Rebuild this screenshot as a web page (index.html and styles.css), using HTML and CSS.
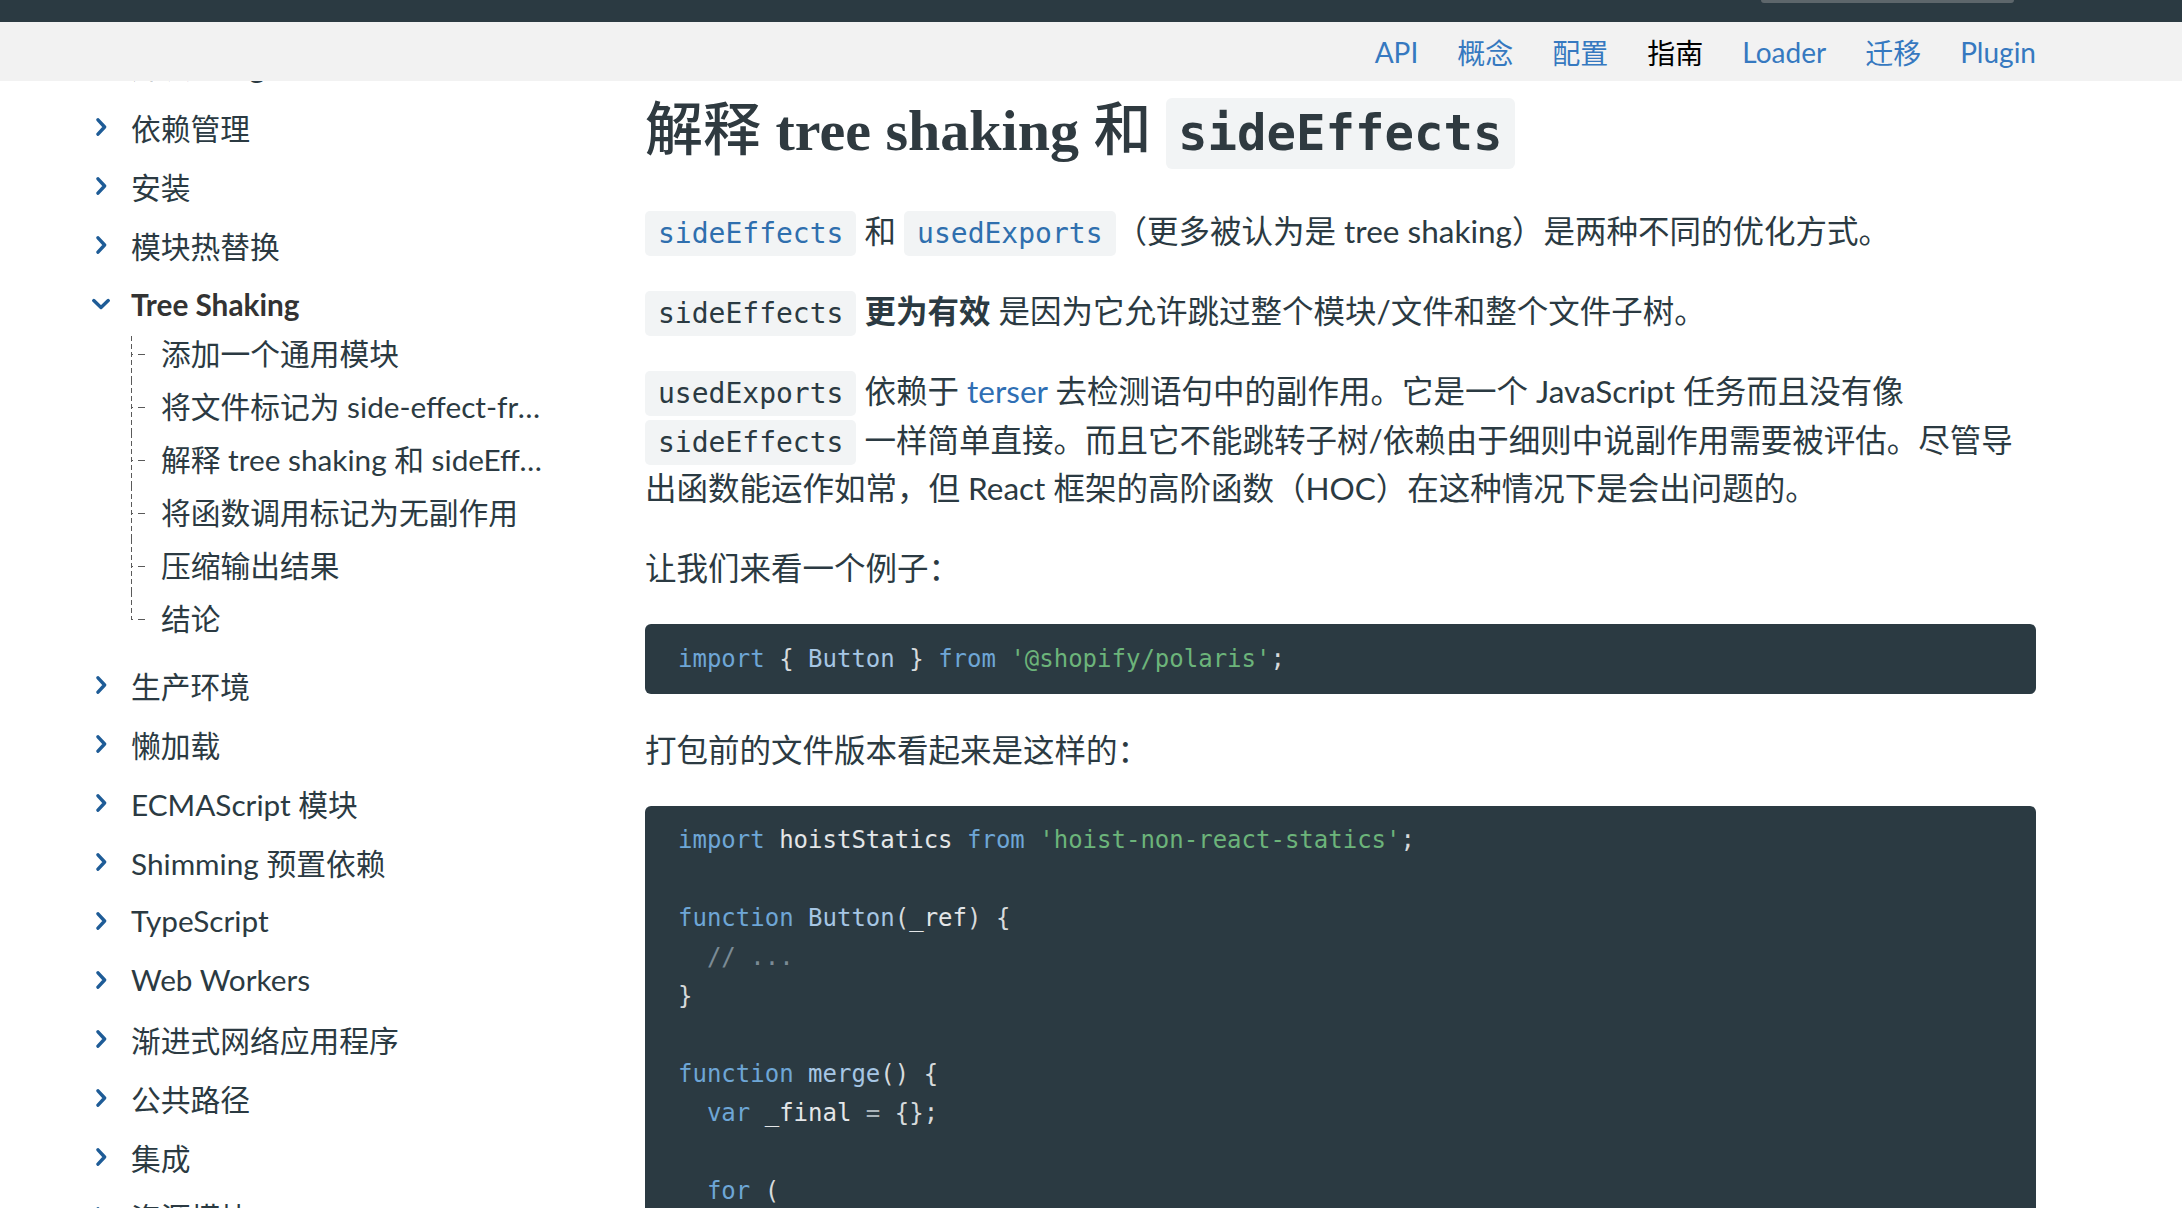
FILE: index.html
```html
<!DOCTYPE html>
<html lang="zh-CN">
<head>
<meta charset="utf-8">
<title>Tree Shaking | webpack 中文文档</title>
<link rel="stylesheet" href="styles.css">
</head>
<body>
<header class="header">
  <div class="topbar"><div class="search"></div></div>
  <nav class="subnav">
    <a class="nav-link" href="#">API</a>
    <a class="nav-link" href="#">概念</a>
    <a class="nav-link" href="#">配置</a>
    <a class="nav-link active" href="#">指南</a>
    <a class="nav-link" href="#">Loader</a>
    <a class="nav-link" href="#">迁移</a>
    <a class="nav-link" href="#">Plugin</a>
  </nav>
</header>
<div class="page">
  <aside class="sidebar">
    <ul class="side-list">
      <li class="side-group"><div class="side-row"><span class="chev"><svg viewBox="0 0 18 18"><path d="M6 1.8 L12.6 9 L6 16.2"/></svg></span><span class="label">开发 - Vagrant</span></div></li>
      <li class="side-group"><div class="side-row"><span class="chev"><svg viewBox="0 0 18 18"><path d="M6 1.8 L12.6 9 L6 16.2"/></svg></span><span class="label">依赖管理</span></div></li>
      <li class="side-group"><div class="side-row"><span class="chev"><svg viewBox="0 0 18 18"><path d="M6 1.8 L12.6 9 L6 16.2"/></svg></span><span class="label">安装</span></div></li>
      <li class="side-group"><div class="side-row"><span class="chev"><svg viewBox="0 0 18 18"><path d="M6 1.8 L12.6 9 L6 16.2"/></svg></span><span class="label">模块热替换</span></div></li>
      <li class="side-group open">
        <div class="side-row"><span class="chev"><svg viewBox="0 0 18 18"><path d="M1.8 5.6 L9 12.4 L16.2 5.6"/></svg></span><span class="label">Tree Shaking</span></div>
        <ul class="sub">
          <li>添加一个通用模块</li>
          <li>将文件标记为 side-effect-free(无副作用)</li>
          <li>解释 tree shaking 和 sideEffects</li>
          <li>将函数调用标记为无副作用</li>
          <li>压缩输出结果</li>
          <li>结论</li>
        </ul>
      </li>
      <li class="side-group"><div class="side-row"><span class="chev"><svg viewBox="0 0 18 18"><path d="M6 1.8 L12.6 9 L6 16.2"/></svg></span><span class="label">生产环境</span></div></li>
      <li class="side-group"><div class="side-row"><span class="chev"><svg viewBox="0 0 18 18"><path d="M6 1.8 L12.6 9 L6 16.2"/></svg></span><span class="label">懒加载</span></div></li>
      <li class="side-group"><div class="side-row"><span class="chev"><svg viewBox="0 0 18 18"><path d="M6 1.8 L12.6 9 L6 16.2"/></svg></span><span class="label">ECMAScript 模块</span></div></li>
      <li class="side-group"><div class="side-row"><span class="chev"><svg viewBox="0 0 18 18"><path d="M6 1.8 L12.6 9 L6 16.2"/></svg></span><span class="label">Shimming 预置依赖</span></div></li>
      <li class="side-group"><div class="side-row"><span class="chev"><svg viewBox="0 0 18 18"><path d="M6 1.8 L12.6 9 L6 16.2"/></svg></span><span class="label">TypeScript</span></div></li>
      <li class="side-group"><div class="side-row"><span class="chev"><svg viewBox="0 0 18 18"><path d="M6 1.8 L12.6 9 L6 16.2"/></svg></span><span class="label">Web Workers</span></div></li>
      <li class="side-group"><div class="side-row"><span class="chev"><svg viewBox="0 0 18 18"><path d="M6 1.8 L12.6 9 L6 16.2"/></svg></span><span class="label">渐进式网络应用程序</span></div></li>
      <li class="side-group"><div class="side-row"><span class="chev"><svg viewBox="0 0 18 18"><path d="M6 1.8 L12.6 9 L6 16.2"/></svg></span><span class="label">公共路径</span></div></li>
      <li class="side-group"><div class="side-row"><span class="chev"><svg viewBox="0 0 18 18"><path d="M6 1.8 L12.6 9 L6 16.2"/></svg></span><span class="label">集成</span></div></li>
      <li class="side-group"><div class="side-row"><span class="chev"><svg viewBox="0 0 18 18"><path d="M6 1.8 L12.6 9 L6 16.2"/></svg></span><span class="label">资源模块</span></div></li>
      <li class="side-group"><div class="side-row"><span class="chev"><svg viewBox="0 0 18 18"><path d="M6 1.8 L12.6 9 L6 16.2"/></svg></span><span class="label">输出管理</span></div></li>
    </ul>
  </aside>
  <main class="content">
    <h1 class="title"><span class="title-cjk">解释</span> tree shaking <span class="title-cjk">和</span> <code class="title-code">sideEffects</code></h1>
    <p><a class="code-link" href="#"><code>sideEffects</code></a> 和 <a class="code-link" href="#"><code>usedExports</code></a>（更多被认为是 tree shaking）是两种不同的优化方式。</p>
    <p><code>sideEffects</code> <strong>更为有效</strong> 是因为它允许跳过整个模块/文件和整个文件子树。</p>
    <p><code>usedExports</code> 依赖于 <a class="link" href="#">terser</a> 去检测语句中的副作用。它是一个 JavaScript 任务而且没有像 <code>sideEffects</code> 一样简单直接。而且它不能跳转子树/依赖由于细则中说副作用需要被评估。尽管导出函数能运作如常，但 React 框架的高阶函数（HOC）在这种情况下是会出问题的。</p>
    <p>让我们来看一个例子：</p>
    <pre class="code"><span class="kw">import</span> <span class="pn">{</span> <span class="fn">Button</span> <span class="pn">}</span> <span class="kw">from</span> <span class="str">'@shopify/polaris'</span><span class="pn">;</span></pre>
    <p>打包前的文件版本看起来是这样的：</p>
    <pre class="code"><span class="kw">import</span> hoistStatics <span class="kw">from</span> <span class="str">'hoist-non-react-statics'</span><span class="pn">;</span>

<span class="kw">function</span> <span class="fn">Button</span><span class="pn">(</span>_ref<span class="pn">)</span> <span class="pn">{</span>
  <span class="com">// ...</span>
<span class="pn">}</span>

<span class="kw">function</span> <span class="fn">merge</span><span class="pn">()</span> <span class="pn">{</span>
  <span class="kw">var</span> _final <span class="op">=</span> <span class="pn">{};</span>

  <span class="kw">for</span> <span class="pn">(</span>
    <span class="kw">var</span> _len <span class="op">=</span> arguments<span class="pn">.</span>length<span class="pn">,</span>
      objs <span class="op">=</span> <span class="kw">new</span> <span class="fn">Array</span><span class="pn">(</span>_len<span class="pn">),</span></pre>
  </main>
</div>
</body>
</html>
```

FILE: styles.css
```css
* { box-sizing: border-box; }
html, body { margin: 0; padding: 0; }
body {
  background: #ffffff;
  font-family: "Lato", "Noto Sans CJK SC", sans-serif;
  color: #2b3a42;
  height: 1208px;
  overflow: hidden;
}

/* header (sits above the scrolled sidebar) */
.header {
  position: relative;
  z-index: 2;
}
.topbar {
  height: 22px;
  background: #2b3a42;
  display: flex;
  justify-content: flex-end;
  padding-right: 168px;
}
.search {
  width: 253px;
  height: 3px;
  background: #5d666b;
  border-radius: 0 0 7px 7px;
}
.subnav {
  height: 59px;
  background: #f2f2f2;
  display: flex;
  justify-content: flex-end;
  align-items: center;
  gap: 39px;
  padding-right: 146px;
  font-size: 28px;
}
.nav-link { color: #3679c0; text-decoration: none; }
.nav-link.active { color: #000000; }

/* layout */
.page { display: flex; }
.sidebar {
  flex: 0 0 645px;
  height: 1127px;
  overflow: hidden;
}
.content {
  flex: 0 0 1391px;
  height: 1127px;
  overflow: hidden;
}

/* sidebar */
.side-list {
  list-style: none;
  margin: -49px 0 0;
  padding: 0 0 0 92px;
}
.side-row {
  display: flex;
  align-items: center;
  height: 59px;
  font-size: 29.75px;
  color: #2b3a42;
}
.side-group:first-child .side-row { height: 65px; }
.open > .side-row { height: 60px; }
.chev {
  flex: 0 0 18px;
  width: 18px;
  height: 18px;
  margin-right: 21px;
  display: flex;
}
.chev svg { width: 18px; height: 18px; }
.chev path {
  fill: none;
  stroke: #1e5c97;
  stroke-width: 3.4;
  stroke-linecap: round;
  stroke-linejoin: round;
}
.label { white-space: nowrap; }
.open .label { font-weight: 700; color: #333333; }

.sub {
  list-style: none;
  margin: -7px 0 10px 39px;
  padding: 0;
  width: 420px;
}
.sub li {
  position: relative;
  height: 53px;
  line-height: 53px;
  padding-left: 30px;
  font-size: 29.75px;
  color: #2b3a42;
  white-space: nowrap;
  overflow: hidden;
  text-overflow: ellipsis;
}
.sub li::before {
  content: "";
  position: absolute;
  left: 0;
  top: 0;
  bottom: 0;
  width: 1px;
  background: repeating-linear-gradient(to bottom, #5a5a5a 0 5px, transparent 5px 8px);
}
.sub li:first-child::before { top: 9px; }
.sub li:last-child::before { bottom: 50%; }
.sub li::after {
  content: "";
  position: absolute;
  left: 0;
  top: 50%;
  width: 14px;
  height: 1px;
  background: repeating-linear-gradient(to right, #5a5a5a 0 2px, transparent 2px 7px, #5a5a5a 7px 14px);
}

/* content */
.title {
  margin: 13px 0 40px;
  font-family: "Liberation Serif", "Noto Sans CJK SC", serif;
  font-size: 58px;
  font-weight: 700;
  line-height: 73px;
  color: #2f3a40;
}
.title-cjk {
  font-family: "Noto Sans CJK SC", sans-serif;
  font-weight: 500;
  line-height: 1;
}
.title-code {
  font-family: "DejaVu Sans Mono", monospace;
  font-size: 49px;
  font-weight: 700;
  line-height: 1;
  padding: 7px 12px;
  border-radius: 6px;
  background: #f2f4f5;
}
p {
  margin: 0 0 31.5px;
  font-size: 31.5px;
  line-height: 48.5px;
}
p code {
  font-family: "DejaVu Sans Mono", monospace;
  font-size: 28px;
  line-height: 1;
  padding: 6px 13px;
  border-radius: 5px;
  background: #f2f4f5;
}
.code-link { color: #2f6fae; text-decoration: none; }
.link { color: #2f6fb4; text-decoration: none; }
strong { font-weight: 700; }

.code {
  margin: 0 0 31.5px;
  padding: 15.5px 33px;
  background: #2b3a42;
  border-radius: 6px;
  font-family: "DejaVu Sans Mono", monospace;
  font-size: 24px;
  line-height: 39px;
  color: #e4e6e8;
  white-space: pre;
}
.kw { color: #6ea6d6; }
.fn { color: #a6c6e4; }
.str { color: #6cb47a; }
.com { color: #7b8b95; }
.pn { color: #d7dadc; }
.op { color: #aab4ba; }
```
